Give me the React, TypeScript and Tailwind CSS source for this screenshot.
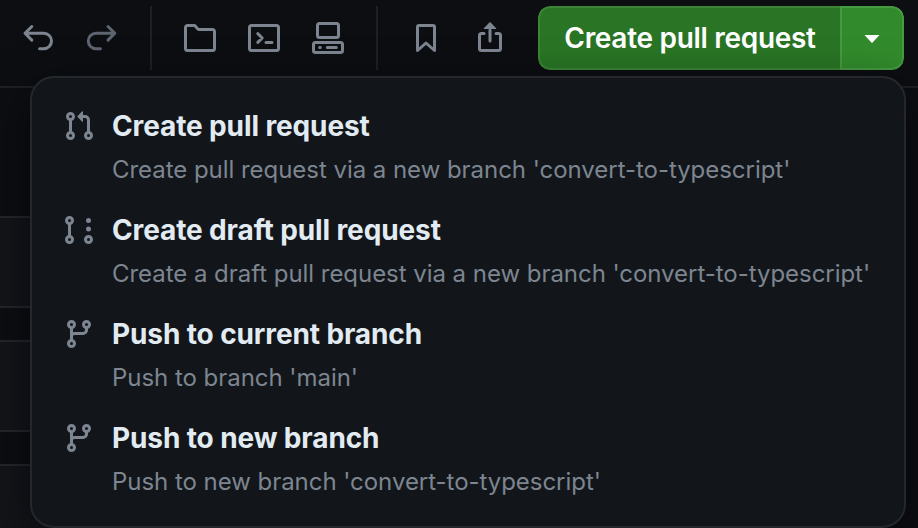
import type { ReactNode } from "react";

function Glyph({ children, color = "text-[#7d8590]" }: { children: ReactNode; color?: string }) {
  return (
    <svg viewBox="0 0 16 16" className={`size-8 shrink-0 ${color}`} fill="none" stroke="currentColor" strokeWidth="1.5" strokeLinecap="round" strokeLinejoin="round">
      {children}
    </svg>
  );
}

const PullRequestIcon = () => (
  <Glyph>
    <circle cx="3.75" cy="3.25" r="1.5" />
    <circle cx="3.75" cy="12.75" r="1.5" />
    <circle cx="12.75" cy="12.75" r="1.5" />
    <path d="M3.75 4.8v6.4M9.2 3.25H11a1.75 1.75 0 0 1 1.75 1.75v6.2" />
    <path fill="currentColor" stroke="none" d="M7.177 3.073 9.573.677A.25.25 0 0 1 10 .854v4.792a.25.25 0 0 1-.427.177L7.177 3.427a.25.25 0 0 1 0-.354Z" />
  </Glyph>
);

const DraftIcon = () => (
  <Glyph>
    <circle cx="3.25" cy="3.25" r="1.5" />
    <circle cx="3.25" cy="12.75" r="1.5" />
    <circle cx="12.75" cy="12.75" r="1.5" />
    <path d="M3.25 4.8v6.4" />
    <circle cx="12.75" cy="3.25" r="1.25" fill="currentColor" stroke="none" />
    <circle cx="12.75" cy="7.5" r="1.25" fill="currentColor" stroke="none" />
  </Glyph>
);

const BranchIcon = () => (
  <Glyph>
    <circle cx="4.25" cy="3.25" r="1.5" />
    <circle cx="4.25" cy="12.75" r="1.5" />
    <circle cx="11.75" cy="3.25" r="1.5" />
    <path d="M4.25 4.8v6.4M11.75 4.8V6A1.75 1.75 0 0 1 10 7.75H6c-1 0-1.75.5-1.75 1.4" />
  </Glyph>
);

const Divider = () => <div className="h-16 w-0.5 shrink-0 bg-[#1d2025]" />;

const items = [
  { icon: <PullRequestIcon />, title: "Create pull request", detail: "Create pull request via a new branch 'convert-to-typescript'" },
  { icon: <DraftIcon />, title: "Create draft pull request", detail: "Create a draft pull request via a new branch 'convert-to-typescript'" },
  { icon: <BranchIcon />, title: "Push to current branch", detail: "Push to branch 'main'" },
  { icon: <BranchIcon />, title: "Push to new branch", detail: "Push to new branch 'convert-to-typescript'" },
];

export default function App() {
  return (
    <div className="relative flex h-[528px] w-[918px] flex-col overflow-hidden bg-[#0d0e12] font-['Inter','Liberation_Sans',sans-serif]">
      <header className="flex h-[88px] shrink-0 items-start border-b-2 border-[#1d2025] pt-1.5 pl-[22px]">
        <div className="flex h-16 items-center">
          <div className="flex gap-8 pr-8">
            <Glyph><path d="M4.9 2.25 1.5 5.65l3.4 3.4M1.8 5.65h9.1a3.85 3.85 0 0 1 0 7.7H8.8" /></Glyph>
            <Glyph color="text-[#5d6570]"><path d="m11 2.25 3.4 3.4L11 9.05M14.1 5.65H5a3.85 3.85 0 0 0 0 7.7h2.2" /></Glyph>
          </div>
          <Divider />
          <div className="flex gap-8 px-8">
            <Glyph><path d="M.75 2.75a1 1 0 0 1 1-1H5a1 1 0 0 1 .8.4l.9 1.2a1 1 0 0 0 .8.4h6.75a1 1 0 0 1 1 1v8.5a1 1 0 0 1-1 1H1.75a1 1 0 0 1-1-1Z" /></Glyph>
            <Glyph><rect x=".75" y="1.75" width="14.5" height="12.5" rx="1" /><path d="M4.9 5.8 7.1 8l-2.2 2.2M9 10.25h3" /></Glyph>
            <Glyph><rect x="2.75" y=".75" width="10.5" height="7" rx="1" /><rect x=".75" y="10.25" width="14.5" height="5" rx="1" /><path d="M7.65 12.75h4.5M3.85 12.75h.3" /></Glyph>
          </div>
          <Divider />
          <div className="flex gap-8 px-8">
            <Glyph><path d="M3.75 14.25V2.5a.75.75 0 0 1 .75-.75h7a.75.75 0 0 1 .75.75v11.75L8 10.5Z" /></Glyph>
            <Glyph><path d="M5 5.75H3.75a1 1 0 0 0-1 1v6.5a1 1 0 0 0 1 1h8.5a1 1 0 0 0 1-1v-6.5a1 1 0 0 0-1-1H11M8 4v5.5" /><path fill="currentColor" stroke="none" d="M7.823.177 4.927 3.073a.25.25 0 0 0 .177.427h5.792a.25.25 0 0 0 .177-.427L8.177.177a.25.25 0 0 0-.354 0Z" /></Glyph>
          </div>
          <div className="flex h-16 w-[366px] overflow-hidden rounded-xl">
            <button className="flex w-[302px] items-center justify-center rounded-l-xl border-2 border-r-0 border-[#3c8537] bg-[#297525] text-[28px] font-semibold tracking-[-0.3px] whitespace-nowrap text-white">Create pull request</button>
            <button className="flex w-16 items-center justify-center rounded-r-xl border-2 border-[#469a41] bg-[#318b2c]">
              <svg viewBox="0 0 16 8" className="mt-0.5 h-2 w-4" fill="white"><path d="M.5 0h15L8.6 7.5q-.6.6-1.2 0Z" /></svg>
            </button>
          </div>
        </div>
      </header>
      <main className="flex flex-col gap-8 pt-32 pr-8">
        <div className="h-[92px] border-y-2 border-[#24272c] bg-[#131519]" />
        <div className="h-[92px] border-y-2 border-[#24272c] bg-[#131519]" />
        <div className="h-[92px] border-y-2 border-[#24272c] bg-[#131519]" />
      </main>
      <div className="absolute top-[76px] left-[30px] flex h-[452px] w-[876px] flex-col rounded-3xl border-2 border-[#24282d] bg-[#12161a] pt-7 pl-[31px] shadow-[0_16px_48px_rgba(1,4,9,0.6)]">
        {items.map((item) => (
          <div key={item.title} className="flex h-[104px] gap-[17px] pt-1">
            {item.icon}
            <div className="whitespace-nowrap">
              <div className="text-[28px] leading-8 font-bold tracking-[-0.12px] text-[#e2ebf2]">{item.title}</div>
              <div className="mt-3 text-[24px] leading-8 tracking-[-0.04px] text-[#7d8590]">{item.detail}</div>
            </div>
          </div>
        ))}
      </div>
    </div>
  );
}
